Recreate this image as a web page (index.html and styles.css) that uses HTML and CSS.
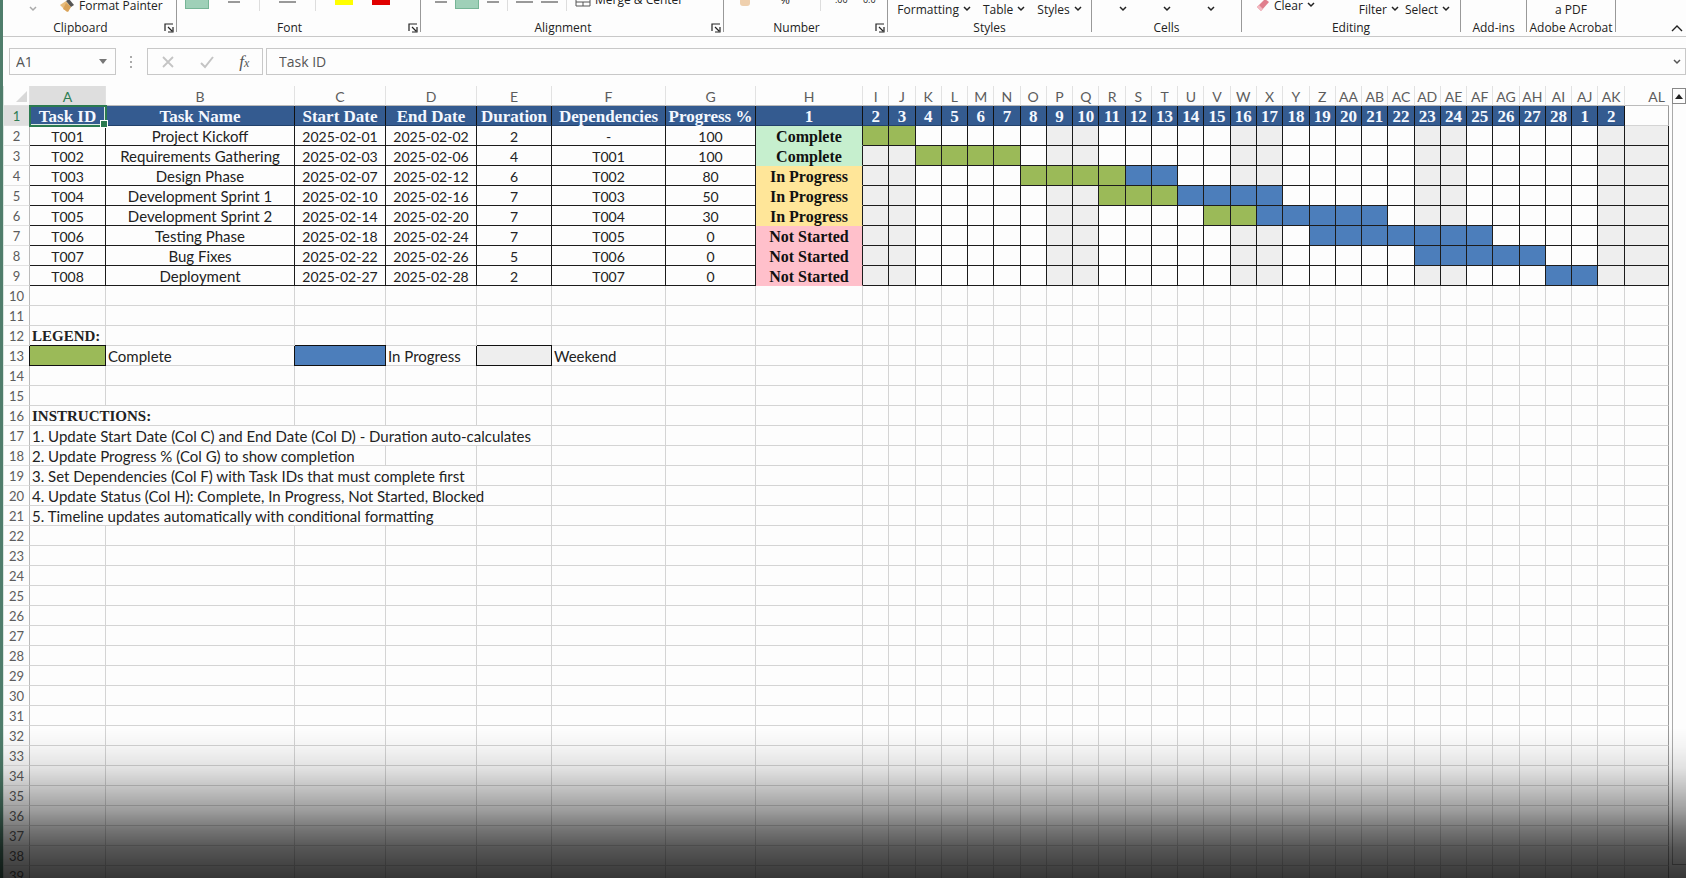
FILE: index.html
```
<!DOCTYPE html>
<html lang="en">
  <head>
    <meta charset="utf-8">
    <title>Gantt Chart</title>
    <link rel="stylesheet" href="styles.css">
  </head>
  <body>
    <svg class="defs" aria-hidden="true">
      <symbol id="chevron" viewBox="0 0 8 6"><path d="M1 1l3 3 3-3" fill="none" stroke="currentColor" stroke-width="1.5"/></symbol>
      <symbol id="launcher" viewBox="0 0 10 10"><path d="M1 8V1h8M4 4l4 4M9 4v5H4" fill="none" stroke="currentColor" stroke-width="1.2"/></symbol>
    </svg>

    <header class="ribbon">
      <section class="group clipboard">
        <div class="tools">
          <button class="tool faint" aria-label="Paste options"><svg class="chev"><use href="#chevron"/></svg></button>
          <button class="tool raised">
            <svg class="brush" viewBox="0 0 16 16"><path d="M1 8l6-4 5 6-4 5z" fill="#e8bd7d"/><path d="M4 12l3-6 5 4-3 5z" fill="#d9a35a"/><path d="M7 4l3-2 5 6-3 2z" fill="#555"/></svg>
            Format Painter
          </button>
        </div>
        <footer><h2>Clipboard</h2><button aria-label="Clipboard settings"><svg class="launch"><use href="#launcher"/></svg></button></footer>
      </section>

      <section class="group font">
        <div class="tools">
          <button class="tool pressed" aria-label="Bold"></button>
          <button class="tool line" aria-label="Underline"></button>
          <i class="split"></i>
          <button class="tool line wide" aria-label="Borders"></button>
          <i class="split"></i>
          <button class="tool swatch yellow" aria-label="Fill color"></button>
          <button class="tool swatch red" aria-label="Font color"></button>
        </div>
        <footer><h2>Font</h2><button aria-label="Font settings"><svg class="launch"><use href="#launcher"/></svg></button></footer>
      </section>

      <section class="group alignment">
        <div class="tools">
          <button class="tool line" aria-label="Align left"></button>
          <button class="tool pressed" aria-label="Center"></button>
          <button class="tool line" aria-label="Align right"></button>
          <i class="split"></i>
          <button class="tool line wide" aria-label="Decrease indent"></button>
          <button class="tool line wide" aria-label="Increase indent"></button>
          <i class="split"></i>
          <button class="tool merge">
            <svg class="merge-icon" viewBox="0 0 16 16"><path d="M1 1h14v14H1zM1 11h14M8 11v4M8 1v4" fill="none" stroke="#555"/></svg>
            Merge &amp; Center
          </button>
        </div>
        <footer><h2>Alignment</h2><button aria-label="Alignment settings"><svg class="launch"><use href="#launcher"/></svg></button></footer>
      </section>

      <section class="group number">
        <div class="tools">
          <button class="tool coin" aria-label="Accounting format"></button>
          <button class="tool percent">%</button>
          <i class="split"></i>
          <button class="tool decimals">.00</button>
          <button class="tool decimals">0.0</button>
        </div>
        <footer><h2>Number</h2><button aria-label="Number settings"><svg class="launch"><use href="#launcher"/></svg></button></footer>
      </section>

      <section class="group styles">
        <div class="tools">
          <button class="tool">Formatting <svg class="chev"><use href="#chevron"/></svg></button>
          <button class="tool">Table <svg class="chev"><use href="#chevron"/></svg></button>
          <button class="tool">Styles <svg class="chev"><use href="#chevron"/></svg></button>
        </div>
        <footer><h2>Styles</h2></footer>
      </section>

      <section class="group cells">
        <div class="tools">
          <button class="tool" aria-label="Insert"><svg class="chev"><use href="#chevron"/></svg></button>
          <button class="tool" aria-label="Delete"><svg class="chev"><use href="#chevron"/></svg></button>
          <button class="tool" aria-label="Format"><svg class="chev"><use href="#chevron"/></svg></button>
        </div>
        <footer><h2>Cells</h2></footer>
      </section>

      <section class="group editing">
        <div class="tools">
          <button class="tool raised">
            <svg class="eraser" viewBox="0 0 14 14"><path d="M1 9l8-8 4 3-8 9z" fill="#e07f8d"/><path d="M1 9l2-2 4 4-2 2z" fill="#f3b8c0"/></svg>
            Clear <svg class="chev"><use href="#chevron"/></svg>
          </button>
          <button class="tool push">Filter <svg class="chev"><use href="#chevron"/></svg></button>
          <button class="tool">Select <svg class="chev"><use href="#chevron"/></svg></button>
        </div>
        <footer><h2>Editing</h2></footer>
      </section>

      <section class="group addins">
        <footer><h2>Add-ins</h2></footer>
      </section>

      <section class="group acrobat">
        <div class="tools"><button class="tool">a PDF</button></div>
        <footer><h2>Adobe Acrobat</h2></footer>
      </section>

      <button class="collapse" aria-label="Collapse ribbon"><svg viewBox="0 0 12 8"><path d="M1 6l5-5 5 5" fill="none" stroke="currentColor" stroke-width="1.4"/></svg></button>
    </header>

    <div class="formula-bar">
      <div class="name-box">
        <input type="text" value="A1" aria-label="Name box">
        <button aria-label="Named ranges"><svg viewBox="0 0 8 5"><path d="M0 0h8L4 5z" fill="#777"/></svg></button>
      </div>
      <svg class="dots" viewBox="0 0 2 12"><path d="M0 0h2v2H0zM0 5h2v2H0zM0 10h2v2H0z" fill="#aaa"/></svg>
      <div class="actions">
        <button aria-label="Cancel"><svg viewBox="0 0 14 14"><path d="M2 2l10 10M12 2L2 12" stroke="#c4c4c4" stroke-width="1.8"/></svg></button>
        <button aria-label="Enter"><svg viewBox="0 0 14 14"><path d="M1 8l4 4 8-10" fill="none" stroke="#c4c4c4" stroke-width="2"/></svg></button>
        <button class="fx" aria-label="Insert function">f<small>x</small></button>
      </div>
      <div class="formula">
        <input type="text" value="Task ID" aria-label="Formula">
        <button aria-label="Expand formula bar"><svg class="chev"><use href="#chevron"/></svg></button>
      </div>
    </div>

    <main class="sheet">
      <table id="grid"></table>
      <div class="scrollbar">
        <button aria-label="Scroll up"><svg viewBox="0 0 8 5"><path d="M0 5h8L4 0z" fill="#222"/></svg></button>
        <div class="track"></div>
      </div>
    </main>

    <div class="shade"></div>

    <script>
      const headers = ['Task ID', 'Task Name', 'Start Date', 'End Date', 'Duration', 'Dependencies', 'Progress %'];

      // start and end are timeline columns, done is how many of them are green
      const tasks = [
        {row: ['T001', 'Project Kickoff', '2025-02-01', '2025-02-02', 2, '-', 100], status: 'Complete', start: 0, end: 1, done: 2},
        {row: ['T002', 'Requirements Gathering', '2025-02-03', '2025-02-06', 4, 'T001', 100], status: 'Complete', start: 2, end: 5, done: 4},
        {row: ['T003', 'Design Phase', '2025-02-07', '2025-02-12', 6, 'T002', 80], status: 'In Progress', start: 6, end: 11, done: 4},
        {row: ['T004', 'Development Sprint 1', '2025-02-10', '2025-02-16', 7, 'T003', 50], status: 'In Progress', start: 9, end: 15, done: 3},
        {row: ['T005', 'Development Sprint 2', '2025-02-14', '2025-02-20', 7, 'T004', 30], status: 'In Progress', start: 13, end: 19, done: 2},
        {row: ['T006', 'Testing Phase', '2025-02-18', '2025-02-24', 7, 'T005', 0], status: 'Not Started', start: 17, end: 23, done: 0},
        {row: ['T007', 'Bug Fixes', '2025-02-22', '2025-02-26', 5, 'T006', 0], status: 'Not Started', start: 21, end: 25, done: 0},
        {row: ['T008', 'Deployment', '2025-02-27', '2025-02-28', 2, 'T007', 0], status: 'Not Started', start: 26, end: 27, done: 0},
      ];

      // Notes under the chart, keyed by row: [text, columns covered, class]
      const notes = {
        12: [['LEGEND:', 1, 'title']],
        13: [['', 1, 'key done'], ['Complete', 1], ['', 1, 'key todo'], ['In Progress', 1], ['', 1, 'key weekend'], ['Weekend', 1]],
        16: [['INSTRUCTIONS:', 2, 'title']],
        17: [['1. Update Start Date (Col C) and End Date (Col D) - Duration auto-calculates', 5]],
        18: [['2. Update Progress % (Col G) to show completion', 3]],
        19: [['3. Set Dependencies (Col F) with Task IDs that must complete first', 4]],
        20: [['4. Update Status (Col H): Complete, In Progress, Not Started, Blocked', 4]],
        21: [['5. Timeline updates automatically with conditional formatting', 4]],
      };

      const DAYS = 29;
      const COLUMNS = 38;
      const ROWS = 39;
      const grid = document.getElementById('grid');

      const columnName = (i) => i < 26 ? String.fromCharCode(65 + i) : 'A' + String.fromCharCode(39 + i);

      const isWeekend = (day) => day % 7 < 2;

      const dayClass = (task, day) => {
        if (day >= task.start && day <= task.end) {
          return day < task.start + task.done ? 'done' : 'todo';
        }
        return isWeekend(day) ? 'weekend' : '';
      }

      const cell = (text, name, span) => `<td class="${name || ''}" colspan="${span || 1}">${text}</td>`;

      const headerRow = () => {
        let html = headers.map((text, i) => cell(text, i ? 'head' : 'head selected')).join('');
        for (let i = 0; i <= DAYS; i++) {
          html += cell(i < 28 ? i + 1 : i - 27, 'head');
        }
        return html + cell('');
      }

      const taskRow = (task) => {
        let html = task.row.map((text, i) => cell(text, i === 1 ? 'task' : 'task figure')).join('');
        html += cell(task.status, 'status ' + task.status.toLowerCase().replace(' ', '-'));
        for (let day = 0; day <= DAYS; day++) {
          html += cell('', 'task ' + dayClass(task, day));
        }
        return html;
      }

      const plainRow = (n) => {
        let used = 0;
        let html = '';
        (notes[n] || []).forEach(([text, span, name]) => {
          html += cell(text, name, span);
          used += span;
        });
        for (; used < COLUMNS; used++) {
          html += cell('');
        }
        return html;
      }

      const widths = ['rows', 'a', 'b', 'c', 'd', 'e', 'f', 'g', 'h'];
      let html = '<colgroup>' + widths.map(w => `<col class="col-${w}">`).join('');
      html += '<col>'.repeat(DAYS) + '<col class="col-al"></colgroup>';

      html += '<thead><tr><th class="corner"><svg viewBox="0 0 10 10"><path d="M10 0v10H0z" fill="#d8d8d8"/></svg></th>';
      for (let i = 0; i < COLUMNS; i++) {
        html += `<th scope="col">${columnName(i)}</th>`;
      }
      html += '</tr></thead><tbody>';

      for (let n = 1; n <= ROWS; n++) {
        html += `<tr><th scope="row">${n}</th>`;
        if (n === 1) {
          html += headerRow();
        } else if (n <= tasks.length + 1) {
          html += taskRow(tasks[n - 2]);
        } else {
          html += plainRow(n);
        }
        html += '</tr>';
      }
      grid.innerHTML = html + '</tbody>';
    </script>
  </body>
</html>
```
FILE: styles.css
```
* {
  box-sizing: border-box;
}
body {
  margin: 0;
  height: 100vh;
  display: flex;
  flex-direction: column;
  overflow: hidden;
  border-left: 3px solid #4f7d6b;
  background-color: #fdfdfd;
  color: #222;
  font-family: "Open Sans", "Noto Sans", sans-serif;
  font-size: 12px;
}
button, input {
  border: none;
  padding: 0;
  background: none;
  color: inherit;
  font: inherit;
}
.defs {
  display: none;
}

/* Ribbon */
.ribbon {
  flex: none;
  display: flex;
  height: 37px;
  overflow: hidden;
  border-bottom: 1px solid #c8c8c8;
}
.group {
  flex: none;
  display: flex;
  flex-direction: column;
  justify-content: flex-end;
  height: 32px;
  border-right: 1px solid #999;
}
.clipboard { width: 174px; }
.font { width: 244px; }
.alignment { width: 303px; }
.number { width: 164px; }
.styles { width: 204px; }
.cells { width: 150px; }
.editing { width: 219px; }
.addins { width: 66px; }
.acrobat { width: 89px; }
.group footer {
  flex: none;
  display: flex;
  align-items: center;
  height: 16px;
  margin-bottom: -4px;
  line-height: 16px;
}
.group h2 {
  flex: 1;
  margin: 0;
  text-align: center;
  font-size: 12px;
  font-weight: normal;
  white-space: nowrap;
}
.group h2:not(:last-child) {
  padding-right: 6px;
}
.group footer button {
  display: flex;
  width: 12px;
}
.launch {
  width: 10px;
  height: 10px;
}
.chev {
  width: 8px;
  height: 6px;
}
.tools {
  flex: none;
  display: flex;
  align-items: flex-end;
  height: 20px;
  margin-bottom: 1px;
}
.tool {
  flex: none;
  display: flex;
  align-items: center;
  gap: 4px;
  height: 20px;
  white-space: nowrap;
}
.faint {
  color: #aaa;
}
.raised {
  height: 28px;
}
.split {
  width: 1px;
  height: 12px;
  background-color: #ddd;
  align-self: flex-start;
}
.clipboard .tools {
  padding-left: 26px;
  gap: 22px;
}
.brush {
  width: 16px;
  height: 16px;
}
.pressed {
  width: 24px;
  margin-bottom: 10px;
  border: 1px solid #76b596;
  background-color: #9fd0b8;
}
.line {
  width: 12px;
  height: 2px;
  margin-bottom: 16px;
  background-color: #999;
}
.wide {
  width: 17px;
}
.swatch {
  width: 18px;
  height: 10px;
  margin-bottom: 14px;
}
.yellow { background-color: #ffff00; }
.red { background-color: #e00000; }
.font .tools {
  padding-left: 8px;
  gap: 19px;
}
.alignment .tools {
  padding-left: 14px;
  gap: 8px;
}
.merge {
  margin-bottom: 10px;
}
.merge-icon {
  width: 16px;
  height: 16px;
}
.number .tools {
  padding-left: 16px;
  gap: 14px;
}
.coin {
  width: 10px;
  height: 8px;
  margin-right: 16px;
  margin-bottom: 13px;
  border-radius: 3px;
  background-color: #efd0ae;
}
.percent {
  margin-right: 16px;
  margin-bottom: 10px;
}
.decimals {
  width: 14px;
  margin-bottom: 10px;
  font-size: 9px;
}
.styles .tools {
  justify-content: center;
  gap: 12px;
}
.cells .tools {
  justify-content: center;
  gap: 36px;
}
.editing .tools {
  padding: 0 10px 0 14px;
  gap: 6px;
}
.eraser {
  width: 14px;
  height: 14px;
}
.push {
  margin-left: auto;
}
.acrobat .tools {
  justify-content: center;
}
.collapse {
  display: flex;
  margin-left: auto;
  align-self: flex-end;
  padding: 0 3px 3px;
}
.collapse svg {
  width: 12px;
  height: 8px;
}

/* Formula bar */
.formula-bar {
  flex: none;
  display: flex;
  align-items: center;
  height: 49px;
  padding: 0 0 0 6px;
  font-size: 14px;
  color: #555;
}
.name-box, .actions, .formula {
  display: flex;
  align-items: center;
  height: 27px;
  border: 1px solid #c8c8c8;
}
.name-box {
  width: 107px;
  padding: 0 8px 0 6px;
}
.name-box input, .formula input {
  flex: 1;
  min-width: 0;
}
.name-box button, .formula button, .scrollbar button {
  display: flex;
}
.name-box svg, .scrollbar svg {
  width: 8px;
  height: 5px;
}
.dots {
  width: 2px;
  height: 12px;
  margin: 0 15px 0 14px;
}
.actions {
  width: 116px;
  justify-content: space-around;
}
.actions svg {
  display: block;
  width: 14px;
  height: 14px;
}
.fx {
  font-family: "Liberation Serif", serif;
  font-size: 17px;
  font-style: italic;
}
.fx small {
  font-size: 12px;
}
.formula {
  flex: 1;
  margin-left: 3px;
  padding: 0 4px 0 12px;
}

/* Sheet */
.sheet {
  flex: 1;
  min-height: 0;
  display: flex;
  align-items: flex-start;
  overflow: hidden;
}
table {
  flex: 1;
  width: 100%;
  min-width: 0;
  table-layout: fixed;
  border-collapse: separate;
  border-spacing: 0;
  border-left: 1px solid #d8e4de;
  font-family: Lato, "Open Sans", sans-serif;
  font-size: 15px;
  line-height: 17px;
}
.col-rows { width: 26px; }
.col-a { width: 76px; }
.col-b { width: 189px; }
.col-c { width: 91px; }
.col-d { width: 91px; }
.col-e { width: 75px; }
.col-f { width: 114px; }
.col-g { width: 90px; }
.col-h { width: 107px; }
.col-al { width: 44px; }
th, td {
  height: 20px;
  padding: 2px 0 0;
  border-right: 1px solid #d4d4d4;
  border-bottom: 1px solid #d4d4d4;
  white-space: nowrap;
}
th {
  color: #5c5c5c;
  font-size: 14px;
  font-weight: normal;
}
thead th {
  border-right-color: #e2e2e2;
  border-bottom-color: #bbb;
}
thead th:nth-child(2), tbody tr:first-child th {
  background-color: #dedede;
  color: #2f7d55;
}
thead th:last-child {
  padding-right: 4px;
  border-right: none;
  text-align: right;
}
thead .corner {
  padding-left: 9px;
  border-bottom-color: #e2e2e2;
}
.corner svg {
  display: block;
  width: 11px;
  height: 11px;
  margin: 0 auto;
}
tbody th {
  font-size: 13px;
  border-right-color: #bbb;
  border-bottom-color: #e2e2e2;
}
td {
  padding-left: 2px;
  color: #222;
}
td:last-child {
  border-right-color: #999;
}
td.head {
  padding-left: 0;
  border-right-color: #111;
  border-bottom-color: #22416b;
  background-color: #345b90;
  color: #f4f8ff;
  font-family: "Liberation Serif", serif;
  font-size: 17px;
  font-weight: bold;
  text-align: center;
}
td.task {
  padding-left: 0;
  border-color: #1c1c1c;
  text-align: center;
}
td.figure {
  font-size: 14px;
}
td.status {
  padding-left: 0;
  border-right-color: #1c1c1c;
  border-bottom-color: transparent;
  color: #111;
  font-family: "Liberation Serif", serif;
  font-size: 16px;
  font-weight: bold;
  text-align: center;
}
.complete { background-color: #c6efce; }
.in-progress { background-color: #ffe699; }
.not-started { background-color: #ffc0cb; }
.done { background-color: #9bba58; }
.todo { background-color: #4c7ebb; }
.weekend { background-color: #eeeeee; }
td.title {
  font-family: "Liberation Serif", serif;
  font-size: 15px;
  font-weight: bold;
}
td.key {
  border-color: #111;
  box-shadow: 0 -1px #111, -1px 0 #111;
}

/* Active cell */
td.selected {
  position: relative;
  box-shadow: inset 0 0 0 1px #dcebe3;
  outline: 2px solid #2b7a50;
  outline-offset: -1px;
}
td.selected::after {
  content: "";
  position: absolute;
  right: -3px;
  bottom: -3px;
  width: 6px;
  height: 6px;
  border: 1px solid #fff;
  background-color: #2b7a50;
}

.scrollbar {
  flex: none;
  display: flex;
  flex-direction: column;
  width: 17px;
  height: 100%;
  padding: 2px 0 13px 3px;
}
.scrollbar button {
  height: 16px;
  align-items: center;
  justify-content: center;
  border: 1px solid #888;
}
.track {
  flex: 1;
  border: 1px solid #aaa;
  border-top: none;
  border-right: none;
}

/* Darkens the bottom of the window */
.shade {
  position: fixed;
  left: 0;
  right: 0;
  bottom: 0;
  height: 150px;
  pointer-events: none;
  background: linear-gradient(rgba(0, 0, 0, 0), rgba(0, 0, 0, .04) 13%, rgba(0, 0, 0, .11) 27%, rgba(0, 0, 0, .24) 41%, rgba(0, 0, 0, .38) 55%, rgba(0, 0, 0, .54) 68%, rgba(0, 0, 0, .67) 81%, rgba(0, 0, 0, .79));
}
```
